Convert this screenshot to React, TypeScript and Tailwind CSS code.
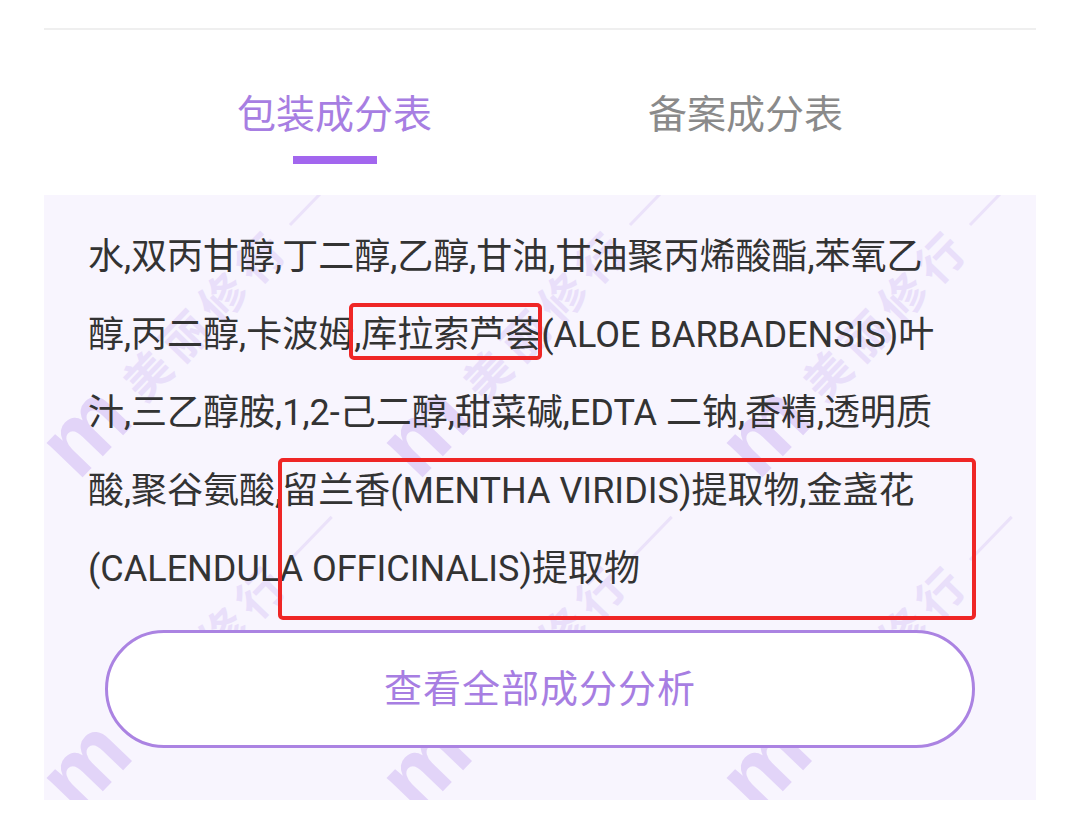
import React from "react";

const FONT = 'Roboto, "Noto Sans CJK SC", "Noto Sans", sans-serif';

function Watermarks() {
  const items: { x: number; y: number }[] = [];
  for (let r = -1; r <= 2; r++) {
    for (let c = -1; c <= 3; c++) {
      items.push({ x: 46 + c * 340, y: 240 + r * 335 });
    }
  }
  return (
    <svg className="absolute inset-0 w-full h-full pointer-events-none" xmlns="http://www.w3.org/2000/svg">
      {items.map((p, i) => (
        <g key={i} transform={`translate(${p.x} ${p.y}) rotate(-46)`}>
          <text x={-42} y={24} fontSize={94} fontWeight={700} fill="#e2d4f8" fontFamily="Liberation Sans, sans-serif">
            m
          </text>
          <text x={60} y={17} fontSize={46} fontWeight={700} fill="#e9dffa" letterSpacing={8} fontFamily='"Noto Sans CJK SC", sans-serif'>
            美丽修行
          </text>
          <line x1={290} y1={-2} x2={350} y2={-2} stroke="#ebe2fa" strokeWidth={3} />
        </g>
      ))}
    </svg>
  );
}

export default function App() {
  const lines = [
    "水,双丙甘醇,丁二醇,乙醇,甘油,甘油聚丙烯酸酯,苯氧乙",
    "醇,丙二醇,卡波姆,库拉索芦荟(ALOE BARBADENSIS)叶",
    "汁,三乙醇胺,1,2-己二醇,甜菜碱,EDTA 二钠,香精,透明质",
    "酸,聚谷氨酸,留兰香(MENTHA VIRIDIS)提取物,金盏花",
    "(CALENDULA OFFICINALIS)提取物",
  ];
  return (
    <div className="w-[1080px] h-[814px] bg-white overflow-hidden" style={{ fontFamily: FONT }}>
      <div className="mx-[44px] mt-[28px] h-[2px] bg-[#efefef]" />
      <div className="flex justify-center mt-[63px]">
        <div className="w-[411px] flex flex-col items-center">
          <div className="text-[39px] leading-[44px] text-[#a77ee2]">包装成分表</div>
          <div className="mt-[19px] w-[84px] h-[8px] bg-[#a266ee]" />
        </div>
        <div className="w-[411px] flex flex-col items-center">
          <div className="text-[39px] leading-[44px] text-[#8a8a8a]">备案成分表</div>
        </div>
      </div>
      <div className="relative mx-[44px] mt-[31px] h-[605px] bg-[#f8f5fe] overflow-hidden">
        <Watermarks />
        <div className="relative pt-[23px] px-[44px] text-[36px] leading-[78px] text-[#333333]">
          {lines.map((l, i) => (
            <div key={i} className="whitespace-nowrap">
              {l}
            </div>
          ))}
        </div>
        <div className="relative mt-[22px] mx-[61px] h-[118px] rounded-full border-[3px] border-[#ab83e2] bg-white flex items-center justify-center">
          <span className="text-[38px] text-[#a77ee2] tracking-[1px]">查看全部成分分析</span>
        </div>
        <div className="absolute left-[305px] top-[108px] w-[193px] h-[57px] border-[4px] border-[#ef2626] rounded-[5px]" />
        <div className="absolute left-[234px] top-[263px] w-[698px] h-[162px] border-[4px] border-[#ef2626] rounded-[5px]" />
      </div>
    </div>
  );
}
